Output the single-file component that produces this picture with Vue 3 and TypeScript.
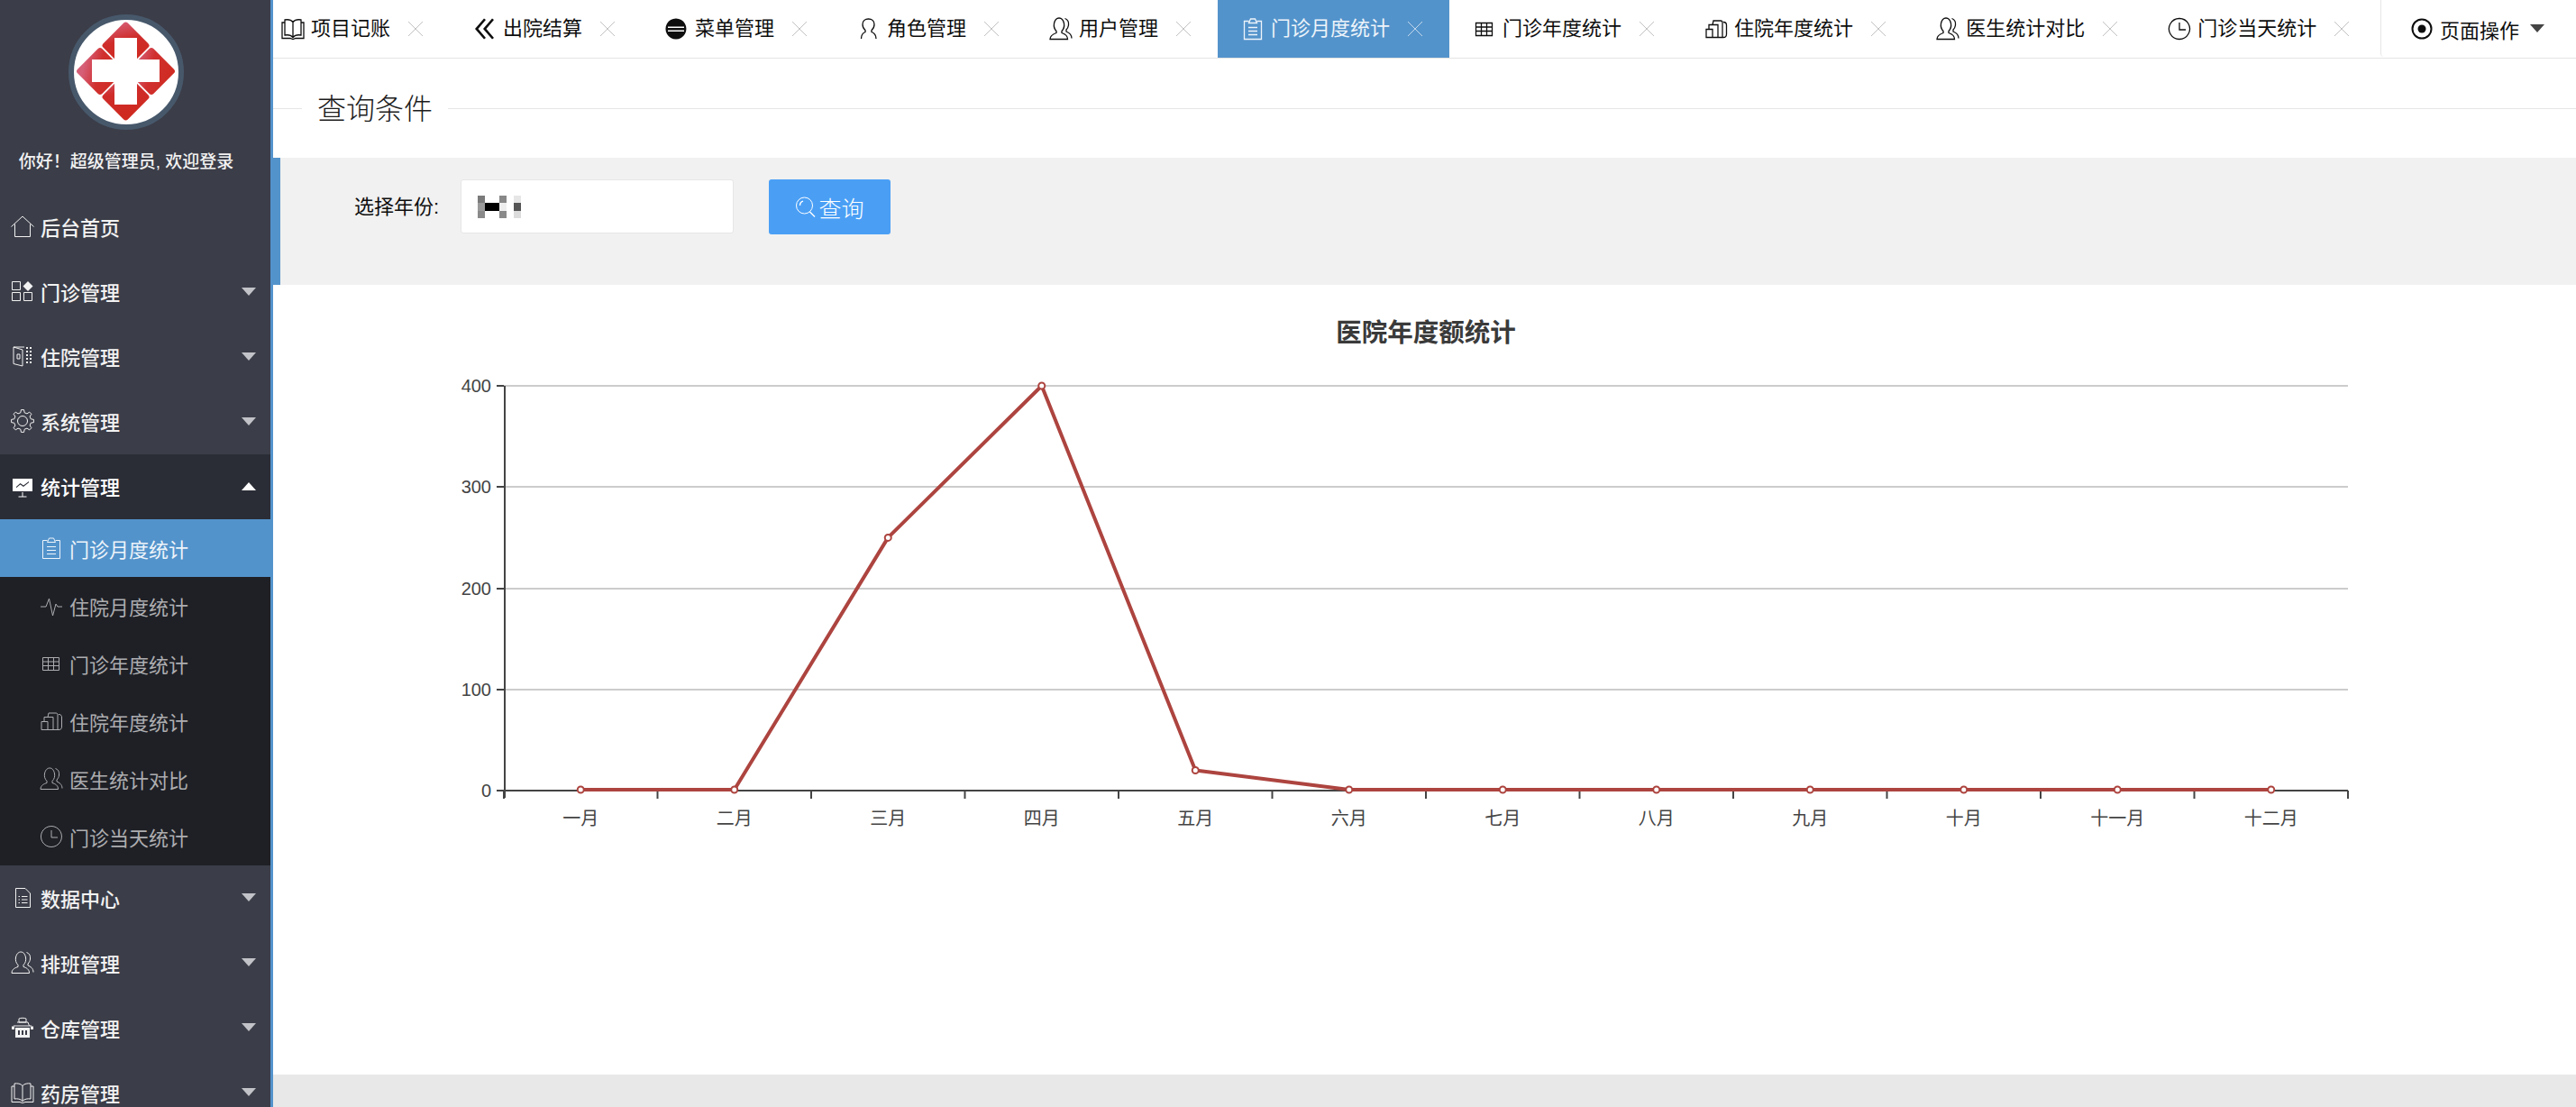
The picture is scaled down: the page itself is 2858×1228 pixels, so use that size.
<template>
  <div class="page">
    <aside class="sidebar">
      <div class="logo-box">
        <svg class="logo" width="128" height="128" viewBox="0 0 128 128">
          <defs>
            <linearGradient id="lobe-a" x1="0" y1="0" x2="1" y2="0.6">
              <stop offset="0" stop-color="#d65f78" />
              <stop offset="0.45" stop-color="#cf2c2a" />
              <stop offset="1" stop-color="#cf2a20" />
            </linearGradient>
            <linearGradient id="lobe-b" x1="1" y1="0" x2="0" y2="0.6">
              <stop offset="0" stop-color="#cf2a20" />
              <stop offset="0.6" stop-color="#d0302e" />
              <stop offset="1" stop-color="#d65f78" />
            </linearGradient>
          </defs>
          <circle cx="64" cy="64" r="61" fill="#fff" stroke="#47586b" stroke-width="6" />
          <g stroke="#fff" stroke-width="1.5">
            <rect x="43.5" y="14.5" width="40" height="40" rx="4" transform="rotate(45 63.5 34.5)" fill="url(#lobe-a)" />
            <rect x="43.5" y="71.5" width="40" height="40" rx="4" transform="rotate(45 63.5 91.5)" fill="url(#lobe-a)" />
            <rect x="15" y="43" width="40" height="40" rx="4" transform="rotate(45 35 63)" fill="url(#lobe-b)" />
            <rect x="72" y="43" width="40" height="40" rx="4" transform="rotate(45 92 63)" fill="url(#lobe-b)" />
          </g>
          <path d="M51 26H76V50H101V75H76V100H51V75H26V50H51Z" fill="#fff" />
        </svg>
      </div>
      <p class="welcome">你好！超级管理员, 欢迎登录</p>
      <nav class="menu">
        <template v-for="group in menu" :key="group.label">
          <div class="menu-item" :class="{ open: group.children }">
            <svg class="menu-icon" viewBox="0 0 26 26">
              <path :d="icons[group.icon].s" fill="none" stroke="currentColor" />
              <path :d="icons[group.icon].f" fill="currentColor" fill-rule="evenodd" />
            </svg>
            <span>{{ group.label }}</span>
            <i v-if="group.arrow" class="arrow"></i>
          </div>
          <div v-if="group.children" class="submenu">
            <div v-for="sub in group.children" :key="sub.label" class="sub-item" :class="{ active: sub.active }">
              <svg class="sub-icon" viewBox="0 0 26 26">
                <path :d="icons[sub.icon].s" fill="none" stroke="currentColor" />
                <path :d="icons[sub.icon].f" fill="currentColor" fill-rule="evenodd" />
              </svg>
              <span>{{ sub.label }}</span>
            </div>
          </div>
        </template>
      </nav>
    </aside>

    <main class="main">
      <header class="topbar">
        <div class="tabs">
          <div v-for="tab in tabs" :key="tab.label" class="tab" :class="{ active: tab.active }">
            <svg class="tab-icon" viewBox="0 0 26 26">
              <path :d="icons[tab.icon].s" fill="none" stroke="currentColor" stroke-width="1.3" />
              <path :d="icons[tab.icon].f" fill="currentColor" fill-rule="evenodd" />
            </svg>
            <span>{{ tab.label }}</span>
            <svg class="tab-close" viewBox="0 0 18 18">
              <path d="M1 1L17 17M17 1L1 17" fill="none" stroke="currentColor" />
            </svg>
          </div>
        </div>
        <div class="page-actions">
          <svg class="tab-icon" viewBox="0 0 26 26">
            <circle cx="12" cy="13" r="10.5" fill="none" stroke="currentColor" stroke-width="2" />
            <circle cx="12" cy="13" r="4.5" fill="currentColor" />
          </svg>
          <span>页面操作</span>
          <i class="caret"></i>
        </div>
      </header>

      <div class="legend">
        <span>查询条件</span>
      </div>

      <form class="query" @submit.prevent>
        <label class="query-label">选择年份:</label>
        <div class="year-input">
          <i v-for="(shade, i) in mosaic" :key="i" :style="{ background: shade }"></i>
        </div>
        <button class="query-btn" type="submit">
          <svg width="24" height="24" viewBox="0 0 24 24">
            <circle cx="10.5" cy="10" r="9" fill="none" stroke="#fff" />
            <path d="M5.5 10A5 5 0 0 1 9 5.2M16.5 17L22 22.5" fill="none" stroke="#fff" stroke-width="1.4" />
          </svg>
          <span>查询</span>
        </button>
      </form>

      <div class="chart">
        <svg width="2555" height="876" viewBox="303 316 2555 876">
          <text x="1582" y="379" class="chart-title" text-anchor="middle">医院年度额统计</text>
          <g v-for="(tick, i) in yTicks" :key="tick.label">
            <line v-if="i > 0" :x1="axisLeft" :x2="axisRight" :y1="tick.y" :y2="tick.y" class="grid" />
            <line :x1="axisLeft - 8" :x2="axisLeft" :y1="tick.y" :y2="tick.y" class="axis" />
            <text :x="axisLeft - 14" :y="tick.y + 7" class="axis-text" text-anchor="end">{{ tick.label }}</text>
          </g>
          <line :x1="axisLeft + 1" :x2="axisLeft + 1" :y1="428" :y2="baseY + 8" class="axis" />
          <line :x1="axisLeft" :x2="axisRight" :y1="baseY" :y2="baseY" class="axis" />
          <line v-for="x in xTicks" :key="x" :x1="x" :x2="x" :y1="baseY" :y2="baseY + 9" class="axis" />
          <polyline :points="linePoints" class="series" />
          <g v-for="p in points" :key="p.label">
            <circle :cx="p.x" :cy="p.y" r="3.5" class="dot" />
            <text :x="p.x" y="915" class="axis-text" text-anchor="middle">{{ p.label }}</text>
          </g>
        </svg>
      </div>

      <footer class="footer"></footer>
    </main>
  </div>
</template>

<script setup lang="ts">
type Icon = { s: string; f: string }

// gear outline, generated so that the teeth come out even
const gearPath = (cx: number, cy: number, outer: number, inner: number, teeth: number) => {
  const parts: string[] = []
  for (let i = 0; i < teeth; i++) {
    const a = (i / teeth) * Math.PI * 2
    const step = (Math.PI * 2) / teeth
    const at = (r: number, t: number) =>
      `${(cx + r * Math.cos(t)).toFixed(1)} ${(cy + r * Math.sin(t)).toFixed(1)}`
    parts.push(`${i === 0 ? 'M' : 'L'}${at(inner, a - step * 0.3)}`)
    parts.push(`L${at(outer, a - step * 0.16)}`)
    parts.push(`L${at(outer, a + step * 0.16)}`)
    parts.push(`L${at(inner, a + step * 0.3)}`)
  }
  return `${parts.join('')}ZM${cx - 5.5} ${cy}a5.5 5.5 0 1 0 11 0a5.5 5.5 0 1 0 -11 0Z`
}

const icons: Record<string, Icon> = {
  home: { s: 'M.5 13.5L13 2L25.5 13.5M4.5 10.5V24.5H21.5V10.5', f: '' },
  apps: {
    s: 'M1.5 2.5H10.5V11.5H1.5ZM1.5 14.5H10.5V23.5H1.5ZM14.5 14.5H23.5V23.5H14.5Z',
    f: 'M19 2L24.5 7.5L19 13L13.5 7.5Z',
  },
  door: {
    s: 'M3 3L13 6V24L3 21.5ZM3 3H15M7 11V16M7 11H10V16H7',
    f: 'M17 3H19V5H17ZM21 3H23V5H21ZM17 7H19V9H17ZM21 7H23V9H21ZM17 11H19V13H17ZM21 11H23V13H21ZM17 15H19V17H17ZM21 15H23V17H21ZM17 19H19V21H17ZM21 19H23V21H21Z',
  },
  gear: { s: gearPath(13, 13, 12.5, 9.5, 8), f: '' },
  board: {
    s: 'M13 20V25M8.5 25H17.5',
    f: 'M2 5H24V19H2ZM6 14L10.5 10L14 12.5L20 8L20 9.3L14 14L10.5 11.5L6 15.3Z',
  },
  clipboard: {
    s: 'M8.5 4.5H3.5V24.5H22.5V4.5H17.5M8.5 6.5L10.5 2H15.5L17.5 6.5ZM8 11.5H18M8 15.5H18M8 19.5H18',
    f: '',
  },
  pulse: { s: 'M1 14H7L10.5 5L14.5 24L18 11L20 14H25', f: '' },
  table: { s: 'M3.5 6.5H21.5V20.5H3.5ZM3.5 11H21.5M3.5 15.5H21.5M9.5 6.5V20.5M15.5 6.5V20.5', f: '' },
  bars: {
    s: 'M2 13.5H9V22.5H2ZM9 22.5H15V8.5L5 8.5V13M15 22.5H20V6C20 4.5 19 4 18 4H10L9 8.5M21 5.5C24 5.5 24.5 7 24.5 9V19C24.5 21 24 22.5 21 22.5H20',
    f: '',
  },
  users: {
    s: 'M1 24.5C1 20 5 18.5 8 17.5V15.5C5.5 13 5 10 5.5 7C6.5 2.5 9 1 11 1C13.5 1 15.5 2.5 16.5 7C17 10 16.5 13 14 15.5V17.5C17 18.5 20.5 20 20.5 24.5ZM17.5 1.5C20.5 2.5 22 5 21.5 9C21.2 11 20.5 12.5 19 14V16C21.5 17 25 19 25 23.5',
    f: '',
  },
  user: {
    s: 'M4.5 24C4.5 19 6.5 17.5 9 16.5V14.5C6.5 12.5 6 10 6 8C6 4 9 2 12.5 2C16 2 19 4 19 8C19 10 18.5 12.5 16 14.5V16.5C18.5 17.5 21 19 21 24',
    f: '',
  },
  clock: { s: 'M13 1.5A11.5 11.5 0 1 1 12.9 1.5ZM13 6V14H20', f: '' },
  doc: { s: 'M5.5 2.5H16L21.5 8V23.5H5.5ZM8.5 11.5H10M12 11.5H18.5M8.5 15H10M12 15H18.5M8.5 18.5H10M12 18.5H18.5', f: '' },
  store: {
    s: 'M3 11H23M9 3C11 2 15 2 17 3V7H9ZM7 7H19L20.5 11',
    f: 'M5 13H21V24H5ZM8 16V21H10V16ZM12 16V21H14V16ZM16 16V21H18V16ZM1 11.5H4V15H1ZM22 11.5H25V15H22Z',
  },
  book: {
    s: 'M13 5.5C11 3 7 2.5 4 3V20C7 19.5 11 20 13 22.5C15 20 19 19.5 22 20V3C19 2.5 15 3 13 5.5ZM13 5.5V22.5M4 6H1V23.5H10L13 24.5L16 23.5H25V6H22',
    f: '',
  },
  back: {
    s: '',
    f: 'M12 1.5L14 3L5.5 13L14 23L12 24.5L2 13ZM21 1.5L23 3L14.5 13L23 23L21 24.5L11 13Z',
  },
  burger: {
    s: '',
    f: 'M12 1.5A11.5 11.5 0 1 1 11.9 1.5ZM3 10.5H21V12H3ZM3 14.5H21V16H3Z',
  },
}

const menu = [
  { label: '后台首页', icon: 'home', arrow: false },
  { label: '门诊管理', icon: 'apps', arrow: true },
  { label: '住院管理', icon: 'door', arrow: true },
  { label: '系统管理', icon: 'gear', arrow: true },
  {
    label: '统计管理',
    icon: 'board',
    arrow: true,
    children: [
      { label: '门诊月度统计', icon: 'clipboard', active: true },
      { label: '住院月度统计', icon: 'pulse' },
      { label: '门诊年度统计', icon: 'table' },
      { label: '住院年度统计', icon: 'bars' },
      { label: '医生统计对比', icon: 'users' },
      { label: '门诊当天统计', icon: 'clock' },
    ],
  },
  { label: '数据中心', icon: 'doc', arrow: true },
  { label: '排班管理', icon: 'users', arrow: true },
  { label: '仓库管理', icon: 'store', arrow: true },
  { label: '药房管理', icon: 'book', arrow: true },
]

const tabs = [
  { label: '项目记账', icon: 'book' },
  { label: '出院结算', icon: 'back' },
  { label: '菜单管理', icon: 'burger' },
  { label: '角色管理', icon: 'user' },
  { label: '用户管理', icon: 'users' },
  { label: '门诊月度统计', icon: 'clipboard', active: true },
  { label: '门诊年度统计', icon: 'table' },
  { label: '住院年度统计', icon: 'bars' },
  { label: '医生统计对比', icon: 'users' },
  { label: '门诊当天统计', icon: 'clock' },
]

// the year in the input is blurred out in the original, read off cell by cell
const mosaic = [
  '#7a7a7a', '#ffffff', '#ffffff', '#888888', '#ffffff', '#e6e6e6',
  '#9a9a9a', '#000000', '#000000', '#eeeeee', '#ffffff', '#555555',
  '#8a8a8a', '#ffffff', '#ffffff', '#8a8a8a', '#ffffff', '#dcdcdc',
]

const months = ['一月', '二月', '三月', '四月', '五月', '六月', '七月', '八月', '九月', '十月', '十一月', '十二月']
const values = [0, 0, 250, 400, 20, 0, 0, 0, 0, 0, 0, 0]

const axisLeft = 559
const axisRight = 2605
const baseY = 877
const step = (axisRight - axisLeft) / 12
const unit = (baseY - 428) / 400

const yTicks = [0, 100, 200, 300, 400].map((v) => ({ label: String(v), y: Math.round(baseY - v * unit) }))
const xTicks = Array.from({ length: 13 }, (_, i) => axisLeft + i * step)
const points = months.map((label, i) => ({
  label,
  x: axisLeft + step * (i + 0.5),
  y: values[i] === 0 ? baseY - 1 : baseY - values[i] * unit,
}))
const linePoints = points.map((p) => `${p.x},${p.y}`).join(' ')
</script>

<style>
html,
body {
  margin: 0;
  overflow: hidden;
  background: #fff;
}
</style>

<style scoped>
.page {
  display: flex;
  height: 100vh;
  overflow: hidden;
  font-family: "Liberation Sans", "Noto Sans CJK SC", sans-serif;
  color: #222;
}

.sidebar {
  flex: 0 0 303px;
  box-sizing: border-box;
  height: 100%;
  overflow: hidden;
  background: #3b3d48;
  border-right: 3px solid #5393cb;
  color: #f2f2f2;
}

.logo-box {
  display: flex;
  padding: 16px 0 0 76px;
}

.logo {
  display: block;
}

.welcome {
  margin: 22px 20px 0 0;
  height: 28px;
  line-height: 28px;
  text-align: center;
  font-size: 19px;
  font-weight: 500;
  white-space: nowrap;
}

.menu {
  margin-top: 22px;
}

.menu-item {
  position: relative;
  box-sizing: border-box;
  display: flex;
  align-items: center;
  height: 72px;
  padding: 0 0 2px 12px;
  font-size: 22px;
  font-weight: 500;
}

.submenu ~ .menu-item {
  padding-bottom: 0;
}

.menu-item.open {
  background: #2b2d36;
  color: #fff;
}

.menu-icon {
  flex: 0 0 26px;
  width: 26px;
  height: 26px;
  margin-right: 7px;
}

.arrow {
  position: absolute;
  right: 16px;
  top: 31px;
  border-left: 8.5px solid transparent;
  border-right: 8.5px solid transparent;
  border-top: 9px solid #c2c3c8;
}

.menu-item.open .arrow {
  border-top: 0;
  border-bottom: 9px solid #fff;
}

.submenu {
  margin-right: -3px;
  padding-right: 3px;
  background: #1e2026;
}

.sub-item {
  display: flex;
  align-items: center;
  height: 64px;
  padding-left: 44px;
  font-size: 22px;
  color: #adadb0;
}

.sub-item.active {
  background: #5393cb;
  color: #eef4fa;
  margin-right: -3px;
}

.sub-icon {
  flex: 0 0 26px;
  width: 26px;
  height: 26px;
  margin-right: 7px;
}

.main {
  flex: 1;
  min-width: 0;
  display: flex;
  flex-direction: column;
  background: #fff;
}

.topbar {
  flex: 0 0 65px;
  box-sizing: border-box;
  display: flex;
  justify-content: space-between;
  border-bottom: 1px solid #e4e4e4;
  overflow: hidden;
}

.tabs {
  display: flex;
  margin-left: -17px;
}

.tab {
  display: flex;
  align-items: center;
  height: 64px;
  padding: 0 29px 0 26px;
  font-size: 22px;
  line-height: 64px;
  color: #0e0e0e;
  white-space: nowrap;
}

.tab.active {
  background: #5393cb;
  color: #eef4fa;
}

.tab-icon {
  flex: 0 0 26px;
  width: 26px;
  height: 26px;
  margin-right: 7px;
}

.tab-close {
  width: 18px;
  height: 18px;
  margin-left: 19px;
  color: #c2c2c2;
}

.tab.active .tab-close {
  color: #c3d8ec;
}

.page-actions {
  display: flex;
  align-items: center;
  box-sizing: border-box;
  width: 217px;
  height: 63px;
  padding-left: 33px;
  border-left: 1px solid #e6e6e6;
  border-bottom-left-radius: 4px;
  font-size: 22px;
  color: #0e0e0e;
}

.page-actions .tab-icon {
  margin-right: 6px;
}

.caret {
  margin-left: 12px;
  border-left: 8.5px solid transparent;
  border-right: 8.5px solid transparent;
  border-top: 9px solid #444;
}

.legend {
  flex: 0 0 110px;
  position: relative;
  display: flex;
  align-items: flex-start;
  padding: 34px 0 0 32px;
  box-sizing: border-box;
}

.legend::before {
  content: "";
  position: absolute;
  left: 0;
  right: 0;
  top: 55px;
  height: 1px;
  background: #e6e6e6;
}

.legend span {
  position: relative;
  padding: 0 17px;
  background: #fff;
  font-size: 32px;
  font-weight: 300;
  line-height: 44px;
  color: #1c1c1c;
}

.query {
  flex: 0 0 141px;
  box-sizing: border-box;
  display: flex;
  align-items: flex-start;
  padding-top: 24px;
  background: #f1f1f1;
  border-left: 8px solid #5393cb;
}

.query-label {
  width: 200px;
  height: 62px;
  padding-right: 24px;
  box-sizing: border-box;
  line-height: 62px;
  text-align: right;
  font-size: 22px;
  color: #0e0e0e;
}

.year-input {
  box-sizing: border-box;
  display: grid;
  grid-template-columns: repeat(6, 8px);
  grid-template-rows: repeat(3, 8.3px);
  width: 303px;
  height: 60px;
  padding: 17px 0 0 18px;
  background: #fff;
  border: 1px solid #e6e6e6;
  border-radius: 3px;
}

.query-btn {
  display: flex;
  align-items: center;
  justify-content: center;
  gap: 2px;
  width: 135px;
  height: 61px;
  margin-left: 39px;
  padding: 0;
  border: 0;
  border-radius: 3px;
  background: #4a9ff5;
  color: #fff;
  font-family: inherit;
  font-size: 25px;
  font-weight: 300;
}

.chart {
  flex: 1;
  min-height: 0;
  overflow: hidden;
}

.chart svg {
  display: block;
}

.chart-title {
  font-size: 28.5px;
  font-weight: 700;
  fill: #3a3a3a;
}

.axis-text {
  font-size: 20px;
  fill: #444;
}

.grid {
  stroke: #ccc;
  stroke-width: 2;
}

.axis {
  stroke: #444;
  stroke-width: 2;
}

.series {
  fill: none;
  stroke: #ad443f;
  stroke-width: 4;
  stroke-linejoin: round;
}

.dot {
  fill: #fff;
  stroke: #ad443f;
  stroke-width: 2;
}

.footer {
  flex: 0 0 36px;
  background: #e8e8e8;
}
</style>
